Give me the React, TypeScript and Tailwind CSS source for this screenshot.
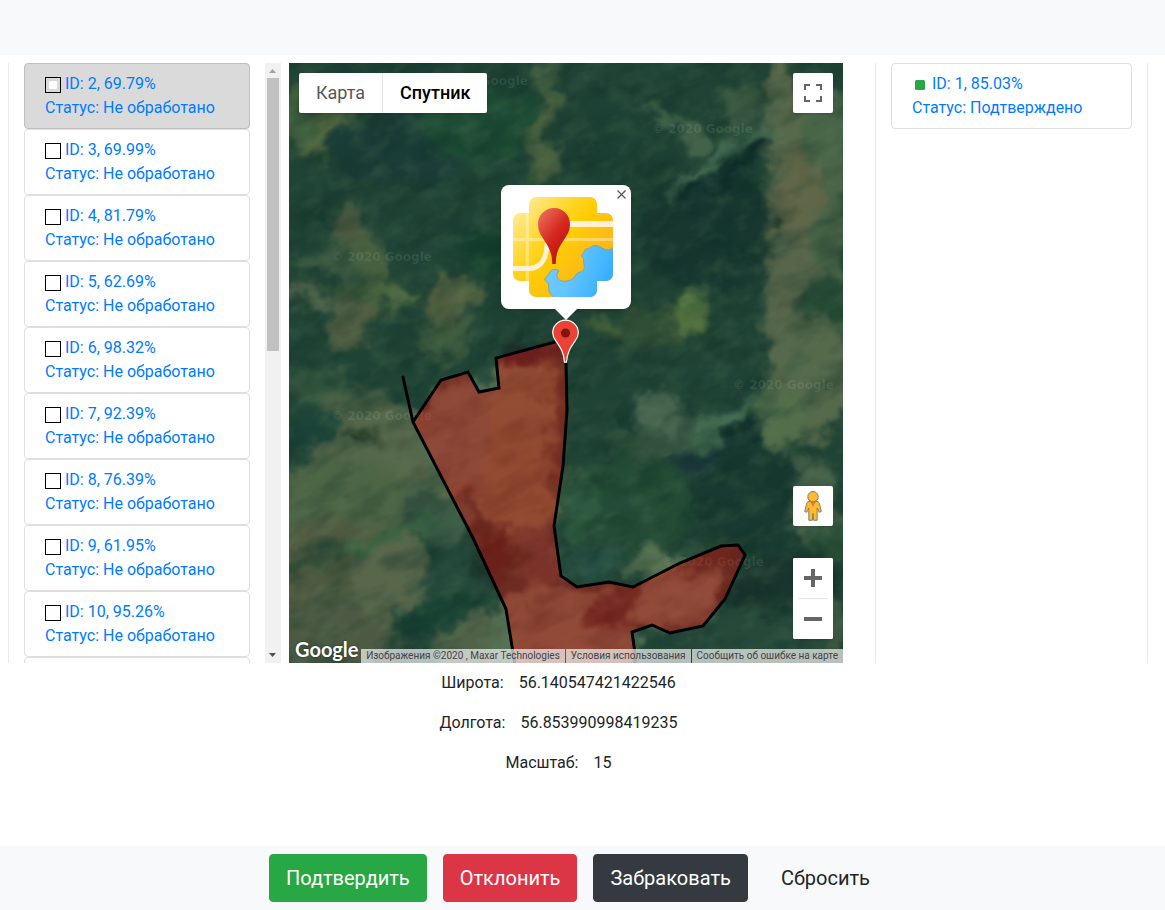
import React from "react";

type Task = { id: number; score: string };

const tasks: Task[] = [
  { id: 2, score: "69.79%" },
  { id: 3, score: "69.99%" },
  { id: 4, score: "81.79%" },
  { id: 5, score: "62.69%" },
  { id: 6, score: "98.32%" },
  { id: 7, score: "92.39%" },
  { id: 8, score: "76.39%" },
  { id: 9, score: "61.95%" },
  { id: 10, score: "95.26%" },
  { id: 11, score: "88.14%" },
];

// Patches of the ground: cx, cy, rx, ry, rotation, colour
type Patch = [number, number, number, number, number, string];

const ground: Patch[] = [
  [35, 68, 30, 26, 0, "#54683f"],
  [10, 55, 20, 28, 0, "#3f5f3c"],
  [120, 30, 70, 20, 10, "#1a4433"],
  [110, 85, 75, 35, 0, "#1b3d38"],
  [190, 60, 60, 40, 0, "#1d4b34"],
  [262, 75, 20, 45, 5, "#49603f"],
  [254, 15, 12, 18, 0, "#405d42"],
  [60, 165, 18, 25, 0, "#4b5a41"],
  [75, 215, 26, 45, 0, "#47603f"],
  [35, 200, 35, 12, 15, "#3a5940"],
  [20, 232, 35, 7, 10, "#50644a"],
  [60, 262, 22, 28, 15, "#515f42"],
  [110, 235, 22, 11, 10, "#516a43"],
  [158, 240, 17, 32, 5, "#515f40"],
  [180, 228, 17, 12, 0, "#566744"],
  [155, 276, 27, 18, 0, "#405c3f"],
  [200, 190, 30, 25, 0, "#17412f"],
  [35, 325, 50, 16, 8, "#34563f"],
  [70, 350, 40, 25, 0, "#4a6044"],
  [98, 367, 14, 10, 0, "#637044"],
  [110, 400, 90, 55, 0, "#56674a"],
  [50, 440, 75, 45, 0, "#4d6545"],
  [45, 515, 70, 60, 0, "#545f43"],
  [100, 520, 35, 60, 0, "#58664a"],
  [35, 575, 60, 38, 0, "#4c5a43"],
  [185, 580, 38, 36, 0, "#506248"],
  [150, 455, 35, 28, 20, "#3b5a46"],
  [175, 508, 55, 20, -15, "#254a3c"],
  [145, 550, 50, 14, -20, "#1a4435"],
  [28, 492, 50, 8, -18, "#304b36"],
  [110, 470, 60, 7, -16, "#3a6442"],
  [145, 440, 45, 6, -15, "#334d3b"],
  [15, 370, 34, 17, -20, "#1d4439"],
  [70, 372, 20, 6, 10, "#263e29"],
  [310, 15, 30, 17, 0, "#24473a"],
  [330, 70, 70, 50, 0, "#1d4134"],
  [375, 53, 30, 6, 22, "#45674b"],
  [408, 72, 14, 18, 0, "#426249"],
  [450, 40, 20, 26, 0, "#3c5a42"],
  [420, 165, 75, 60, 0, "#17372f"],
  [440, 105, 68, 11, -35, "#0f2d2a"],
  [434, 93, 66, 7, -35, "#42684f"],
  [497, 60, 22, 75, -3, "#58684a"],
  [540, 90, 28, 65, 0, "#496548"],
  [510, 155, 28, 65, 0, "#616648"],
  [540, 190, 22, 50, 0, "#456144"],
  [500, 245, 25, 80, 0, "#57654a"],
  [538, 245, 24, 35, 0, "#284b37"],
  [525, 315, 45, 60, 0, "#55694b"],
  [360, 265, 50, 20, -15, "#304d35"],
  [397, 248, 20, 22, 0, "#54723f"],
  [315, 265, 15, 10, 0, "#425c39"],
  [370, 350, 22, 23, 0, "#496550"],
  [355, 385, 38, 18, 10, "#31513d"],
  [400, 385, 22, 35, 0, "#34523f"],
  [443, 374, 66, 11, -34, "#102f2c"],
  [440, 358, 60, 9, -34, "#446c52"],
  [490, 355, 22, 32, 0, "#536e4b"],
  [395, 415, 55, 25, -25, "#19353a"],
  [350, 440, 65, 45, 0, "#234b35"],
  [465, 440, 65, 60, 0, "#183a30"],
  [527, 440, 25, 50, -12, "#48634a"],
  [542, 478, 15, 20, 0, "#2c5139"],
  [370, 502, 35, 15, 0, "#587252"],
  [495, 520, 60, 25, -12, "#19352d"],
  [535, 565, 22, 35, 0, "#3f5942"],
  [465, 575, 75, 30, 0, "#26493a"],
  [290, 450, 18, 35, 0, "#2f5a40"],
  [305, 500, 30, 14, 0, "#285044"],
  [182, 370, 50, 55, 0, "#527056"],
  [239, 350, 38, 62, 0, "#5a7650"],
  [230, 420, 45, 55, 0, "#58734c"],
  [245, 290, 35, 16, 0, "#1f302c"],
  [270, 380, 10, 80, 0, "#2e4a36"],
  [205, 490, 21, 28, 15, "#1d3429"],
  [250, 510, 20, 50, 0, "#3d5646"],
  [275, 570, 70, 50, 0, "#567256"],
  [330, 545, 35, 14, -20, "#2b3c34"],
  [390, 535, 48, 30, -20, "#587459"],
  [420, 496, 35, 8, -25, "#28402e"],
];

const watermarks: [number, number][] = [
  [138, 22],
  [363, 70],
  [42, 198],
  [444, 326],
  [42, 357],
  [374, 503],
];

function SatelliteImage() {
  return (
    <svg
      className="absolute inset-0 h-full w-full"
      viewBox="0 0 554 600"
      preserveAspectRatio="xMidYMid slice"
      aria-hidden="true"
    >
      <defs>
        <filter id="terrain" x="-5%" y="-5%" width="110%" height="110%" colorInterpolationFilters="sRGB">
          <feGaussianBlur stdDeviation="4" result="soft" />
          <feTurbulence type="fractalNoise" baseFrequency="0.035" numOctaves="3" seed="8" result="warp" />
          <feDisplacementMap in="soft" in2="warp" scale="36" xChannelSelector="R" yChannelSelector="G" />
        </filter>
        <filter id="shade" x="0" y="0" width="100%" height="100%" colorInterpolationFilters="sRGB">
          <feTurbulence type="fractalNoise" baseFrequency="0.022 0.045" numOctaves="3" seed="21" />
          <feColorMatrix values="0 0 0 0 0.04  0 0 0 0 0.17  0 0 0 0 0.14  2.4 0 0 0 -1" />
        </filter>
        <filter id="light" x="0" y="0" width="100%" height="100%" colorInterpolationFilters="sRGB">
          <feTurbulence type="fractalNoise" baseFrequency="0.04 0.06" numOctaves="3" seed="5" />
          <feColorMatrix values="0 0 0 0 0.36  0 0 0 0 0.5  0 0 0 0 0.36  0 2 0 0 -0.9" />
        </filter>
      </defs>
      <rect width="554" height="600" fill="#1f4335" />
      <g filter="url(#terrain)">
        <rect x="-40" y="-40" width="634" height="680" fill="#1f4335" />
        {ground.map(([cx, cy, rx, ry, turn, fill], i) => (
          <ellipse key={i} cx={cx} cy={cy} rx={rx} ry={ry} fill={fill} transform={`rotate(${turn} ${cx} ${cy})`} />
        ))}
      </g>
      <g transform="rotate(-25 277 300)">
        <rect x="-150" y="-150" width="854" height="900" filter="url(#shade)" opacity="0.36" />
        <rect x="-150" y="-150" width="854" height="900" filter="url(#light)" opacity="0.28" />
      </g>
      <g fill="#ffffff" fillOpacity="0.09" fontFamily="'DejaVu Sans', sans-serif" fontSize="12" fontWeight="700">
        {watermarks.map(([x, y], i) => (
          <text key={i} x={x} y={y}>
            © 2020 Google
          </text>
        ))}
      </g>
      <path
        d="M124 359 152 317 179 309 190 329 210 325 207 295 277 276 277 300 278 347 274 403 265 463 272 513 288 524 320 519 344 524 391 500 432 483 449 482 456 492 436 536 414 563 381 570 363 562 343 569 346 590 346 602 226 602 217 546 184 475Z"
        fill="#ff0000"
        fillOpacity="0.35"
      />
      <path
        d="M114 314 124 359 184 475 217 546 226 602M124 359 152 317 179 309 190 329 210 325 207 295 277 276 277 300 278 347 274 403 265 463 272 513 288 524 320 519 344 524 391 500 432 483 449 482 456 492 436 536 414 563 381 570 363 562 343 569 346 590 346 602"
        fill="none"
        stroke="#000000"
        strokeWidth="3"
        strokeLinecap="round"
      />
    </svg>
  );
}

function MapLogo() {
  return (
    <svg width="100" height="100" viewBox="0 0 100 100" role="img" aria-label="2ГИС">
      <defs>
        <linearGradient id="land" x1="0" y1="0.05" x2="1" y2="0.9">
          <stop offset="0" stopColor="#ffefb0" />
          <stop offset="0.35" stopColor="#ffd522" />
          <stop offset="0.5" stopColor="#ffcb05" />
          <stop offset="0.75" stopColor="#fdb81b" />
          <stop offset="1" stopColor="#fba52a" />
        </linearGradient>
        <linearGradient id="water" x1="0" y1="0" x2="1" y2="0.3">
          <stop offset="0" stopColor="#7acbff" />
          <stop offset="0.5" stopColor="#63c4ff" />
          <stop offset="1" stopColor="#39b0ff" />
        </linearGradient>
        <linearGradient id="needle" x1="0" y1="0" x2="0.7" y2="1">
          <stop offset="0" stopColor="#f07a67" />
          <stop offset="0.55" stopColor="#d5281f" />
          <stop offset="1" stopColor="#b80f12" />
        </linearGradient>
        <clipPath id="cross">
          <rect x="16" width="68" height="100" rx="7" />
          <rect y="16" width="100" height="68" rx="7" />
        </clipPath>
      </defs>
      <g clipPath="url(#cross)">
        <rect width="100" height="100" fill="url(#land)" />
        <path d="M0 42.5H100M14.3 16V84" stroke="#fff" strokeOpacity="0.35" strokeWidth="3.2" fill="none" />
        <path d="M50 27H100" stroke="#fff2d2" strokeWidth="6" />
        <path d="M0 71.5H16C29 71 34 60 34 46" stroke="#fff2d2" strokeWidth="5" fill="none" />
        <path
          d="M100 51C97 53 94 53.500 91 52S86 48.500 82 48.500C78 48.500 78 51 75 51.500S71 53 71 55.500C68 58 68 59 70.500 61.500C70 65 72 69 71 72C70 75 67 75 65.500 75.500C62 77 62 81 58.600 82.500C55 84 52 84.500 49 84C45 83 43 79 44.500 76L46 73.800C43 71.500 39 72.500 37 74.500C36 78 32 80 31.600 83L35.500 86.500C36 90 35 93 37 96L41 101H101Z"
          fill="url(#water)"
          stroke="#7f9f8c"
          strokeWidth="0.8"
        />
      </g>
      <path d="M41 11C32 11 25 18 25 27C25 42 39 45 39.300 67H42.700C43 45 57 42 57 27C57 18 50 11 41 11Z" fill="url(#needle)" />
    </svg>
  );
}

function Pin() {
  return (
    <svg className="absolute left-1/2 top-[256px] -ml-[14px]" width="27" height="44" viewBox="0 0 27 44" role="img" aria-label="Маркер">
      <path
        d="M13.500 1.200C6.600 1.200 .700 6.700 .700 13.600C.700 17 2.200 19.800 4 22.200C8 28 11.800 32.500 12.500 43.200H14.500C15.200 32.500 19 28 23 22.200C24.800 19.800 26.300 17 26.300 13.600C26.300 6.700 20.400 1.200 13.500 1.200Z"
        fill="#ea4335"
        stroke="#ffffff"
        strokeWidth="1.2"
      />
      <circle cx="13.500" cy="14" r="4.600" fill="#811411" />
    </svg>
  );
}

const control = "flex h-10 w-10 items-center justify-center bg-white";

function MapView() {
  return (
    <section aria-label="Карта" className="relative h-[600px] min-w-0 flex-1 overflow-hidden bg-[#1f4335]">
      <SatelliteImage />

      <div className="absolute left-[10px] top-[10px] flex h-10 overflow-hidden rounded-[2px] bg-white text-lg shadow-sm">
        <button type="button" className="border-r border-[#e6e6e6] px-[17px] text-[#565656]">
          Карта
        </button>
        <button type="button" className="px-[17px] font-medium text-black">
          Спутник
        </button>
      </div>

      <button type="button" aria-label="Во весь экран" className={`${control} absolute right-[10px] top-[10px] rounded-[2px] shadow-sm`}>
        <svg width="18" height="18" viewBox="0 0 18 18" fill="#666666" aria-hidden="true">
          <path d="M0 0v6h2V2h4V0H0zM16 0h-4v2h4v4h2V0h-2zM16 16h-4v2h6v-6h-2v4zM2 12H0v6h6v-2H2v-4z" />
        </svg>
      </button>

      <div className="absolute bottom-6 right-[10px] flex flex-col gap-8">
        <button type="button" aria-label="Просмотр улиц" className={`${control} rounded-[2px] shadow-sm`}>
          <svg width="18" height="30" viewBox="0 0 18 30" aria-hidden="true">
            <path
              d="M5 10.500C3.500 10.800 3 11.500 2.500 13L.700 20.500L2.800 21.300L4.800 17V29.300H8.300L9 22.500L9.700 29.300H13.200V17L15.200 21.300L17.300 20.500L15.500 13C15 11.500 14.500 10.800 13 10.500Z"
              fill="#fdbb2d"
              stroke="#7d7568"
              strokeWidth="0.9"
            />
            <path d="M6 10.500H12L9 16Z" fill="#e17f3b" />
            <circle cx="9" cy="5.700" r="5.200" fill="#fdbb2d" stroke="#7d7568" strokeWidth="0.9" />
          </svg>
        </button>
        <div className="flex flex-col items-center rounded-[2px] bg-white shadow-sm">
          <button type="button" aria-label="Увеличить" className={`${control} rounded-[2px]`}>
            <svg width="18" height="18" viewBox="0 0 18 18" fill="#666666" aria-hidden="true">
              <path d="M7 0h4v7h7v4h-7v7H7v-7H0V7h7z" />
            </svg>
          </button>
          <div className="h-px w-[30px] bg-[#e6e6e6]" />
          <button type="button" aria-label="Уменьшить" className={`${control} rounded-[2px]`}>
            <svg width="18" height="18" viewBox="0 0 18 18" fill="#666666" aria-hidden="true">
              <path d="M0 7h18v4H0z" />
            </svg>
          </button>
        </div>
      </div>

      <Pin />

      <div className="absolute left-1/2 top-[122px] -translate-x-1/2">
        <div className="rounded-lg bg-white py-3 pl-3 pr-[18px] shadow-md">
          <MapLogo />
        </div>
        <svg className="mx-auto block" width="22" height="11" viewBox="0 0 22 11" fill="#ffffff" aria-hidden="true">
          <path d="M0 0H22L11 11Z" />
        </svg>
        <button type="button" aria-label="Закрыть" className="absolute right-1 top-1 p-px">
          <svg width="9" height="9" viewBox="0 0 9 9" stroke="#555555" strokeWidth="1.2" aria-hidden="true">
            <path d="M.5.5l8 8M8.500.5l-8 8" />
          </svg>
        </button>
      </div>

      <div className="absolute inset-x-0 bottom-0 flex items-end justify-between">
        <a href="#google" className="pl-[6px] font-['Lato'] text-xl font-bold leading-7 text-white [text-shadow:0_0_2px_rgba(0,0,0,0.6)]">
          Google
        </a>
        <div className="flex h-[14px] gap-px whitespace-nowrap text-[10px] leading-[14px] text-[#444444]">
          <span className="bg-[#f5f5f5]/70 px-[5px]">Изображения ©2020 , Maxar Technologies</span>
          <a href="#terms" className="bg-[#f5f5f5]/70 px-[5px]">
            Условия использования
          </a>
          <a href="#report" className="bg-[#f5f5f5]/70 px-[5px]">
            Сообщить об ошибке на карте
          </a>
        </div>
      </div>
    </section>
  );
}

function TaskList() {
  return (
    <aside className="flex h-[600px] w-[273px] shrink-0 border-l border-[#e9e9e9]">
      <ul className="min-w-0 flex-1 overflow-y-auto px-[15px] [scrollbar-width:none]">
        {tasks.map((task, i) => (
          <li key={task.id}>
            <label
              className={
                "block cursor-pointer rounded border px-5 py-2 text-[#007bff] " +
                (i === 0 ? "border-[#bfbfbf] bg-[#dadada]" : "border-[#dfdfdf] bg-white")
              }
            >
              <input
                type="checkbox"
                defaultChecked={i === 0}
                className="mr-1 inline-grid h-4 w-4 appearance-none place-content-center border border-black align-text-bottom checked:before:h-2 checked:before:w-2 checked:before:rounded-[1px] checked:before:bg-white checked:before:content-['']"
              />
              ID: {task.id}, {task.score}
              <br />
              Статус: Не обработано
            </label>
          </li>
        ))}
      </ul>
      <div className="flex w-4 flex-col items-center bg-[#f1f1f1]" aria-hidden="true">
        <svg width="16" height="15" viewBox="0 0 16 15" fill="#a3a3a3">
          <path d="M4 10H11L7.500 6Z" />
        </svg>
        <div className="h-[273px] w-3 bg-[#c1c1c1]" />
        <svg className="mt-auto" width="16" height="15" viewBox="0 0 16 15" fill="#505050">
          <path d="M4 5H11L7.500 9Z" />
        </svg>
      </div>
    </aside>
  );
}

function DoneList() {
  return (
    <aside className="ml-6 h-[600px] w-[273px] shrink-0 border-x border-[#e9e9e9] px-[15px]">
      <a href="#task-1" className="block rounded border border-[#dfdfdf] px-5 py-2 text-[#007bff]">
        <svg className="mr-1 inline-block align-text-bottom" width="16" height="16" viewBox="0 0 16 16" aria-hidden="true">
          <rect x="3" y="3" width="10" height="10" rx="1.500" fill="#28a745" />
        </svg>
        ID: 1, 85.03%
        <br />
        Статус: Подтверждено
      </a>
    </aside>
  );
}

const details = [
  { label: "Широта:", value: "56.140547421422546" },
  { label: "Долгота:", value: "56.853990998419235" },
  { label: "Масштаб:", value: "15" },
];

const actions = [
  { label: "Подтвердить", tone: "bg-[#28a745] border-[#28a745] text-white" },
  { label: "Отклонить", tone: "bg-[#dc3545] border-[#dc3545] text-white" },
  { label: "Забраковать", tone: "bg-[#343a40] border-[#343a40] text-white" },
  { label: "Сбросить", tone: "bg-[#f8f9fa] border-[#f8f9fa] text-[#212529]" },
];

export default function App() {
  return (
    <div className="flex min-h-screen flex-col bg-white font-['Roboto',sans-serif] text-base text-[#212529]">
      <header className="h-[55px] bg-[#f8f9fa]" />
      <main className="pt-2">
        <div className="flex gap-2 pl-2 pr-[17px]">
          <TaskList />
          <MapView />
          <DoneList />
        </div>
        <dl className="ml-[289px] mr-[322px]">
          {details.map((row) => (
            <div key={row.label} className="flex justify-center py-2">
              <dt>{row.label}</dt>
              <dd className="px-[15px]">{row.value}</dd>
            </div>
          ))}
        </dl>
      </main>
      <footer className="mt-auto flex justify-center gap-4 bg-[#f8f9fa] py-2 pr-[9px]">
        {actions.map((action) => (
          <button key={action.label} type="button" className={`h-12 rounded border px-4 text-xl ${action.tone}`}>
            {action.label}
          </button>
        ))}
      </footer>
    </div>
  );
}
